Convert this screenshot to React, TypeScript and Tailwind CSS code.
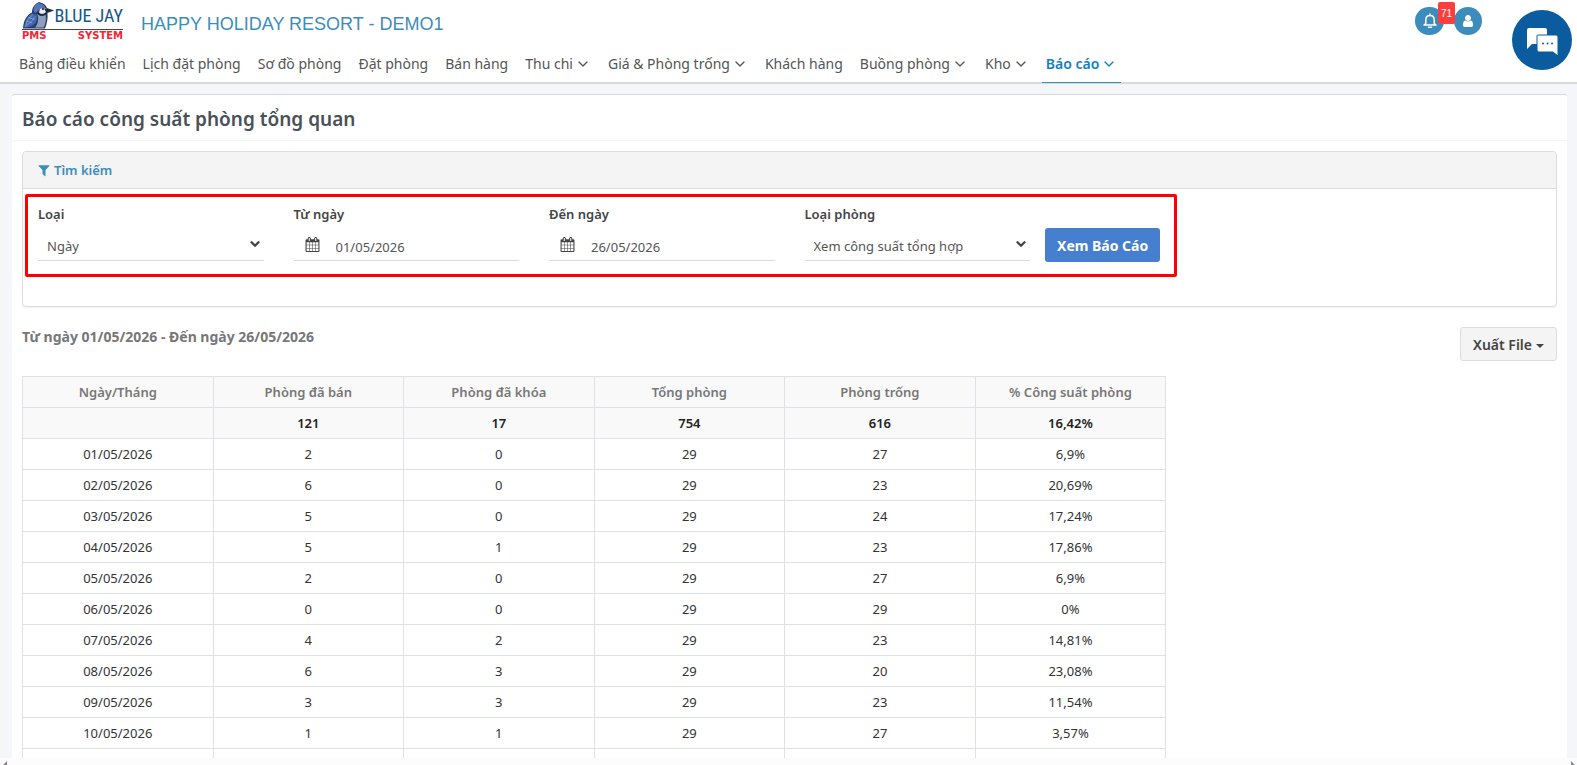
import { ReactNode } from 'react';
import { ChevronDown } from 'lucide-react';

const navItems = [
  { label: 'Bảng điều khiển' },
  { label: 'Lịch đặt phòng' },
  { label: 'Sơ đồ phòng' },
  { label: 'Đặt phòng' },
  { label: 'Bán hàng' },
  { label: 'Thu chi', dropdown: true },
  { label: 'Giá & Phòng trống', dropdown: true },
  { label: 'Khách hàng' },
  { label: 'Buồng phòng', dropdown: true },
  { label: 'Kho', dropdown: true },
  { label: 'Báo cáo', dropdown: true, active: true },
];

const columns = ['Ngày/Tháng', 'Phòng đã bán', 'Phòng đã khóa', 'Tổng phòng', 'Phòng trống', '% Công suất phòng'];

const totals = ['', '121', '17', '754', '616', '16,42%'];

const rows = [
  ['01/05/2026', '2', '0', '29', '27', '6,9%'],
  ['02/05/2026', '6', '0', '29', '23', '20,69%'],
  ['03/05/2026', '5', '0', '29', '24', '17,24%'],
  ['04/05/2026', '5', '1', '29', '23', '17,86%'],
  ['05/05/2026', '2', '0', '29', '27', '6,9%'],
  ['06/05/2026', '0', '0', '29', '29', '0%'],
  ['07/05/2026', '4', '2', '29', '23', '14,81%'],
  ['08/05/2026', '6', '3', '29', '20', '23,08%'],
  ['09/05/2026', '3', '3', '29', '23', '11,54%'],
  ['10/05/2026', '1', '1', '29', '27', '3,57%'],
  ['', '', '', '', '', ''],
];

function BirdIcon() {
  return (
    <svg viewBox="0 0 64 54" className="h-[27px] w-8" aria-hidden="true">
      <path d="M2 53 C3 36 10 26 20 21 C20 12 24 5 34 0 C43 2 48 6 50 12 L64 17 L51 22 C52 34 50 44 46 53 Z" fill="#2b3c69" />
      <path d="M23 17 C23 10 27 4 34 2 C41 4 45 7 47 11 L38 13 C34 15 31 20 26 22 Z" fill="#5577b8" />
      <path d="M36 14 C40 11 46 11 49 14 L48 20 C44 25 37 25 34 21 Z" fill="#e8ebf2" />
      <path d="M44 13 L64 17 L48 20 Z" fill="#20242e" />
      <circle cx="42" cy="14" r="2" fill="#10141f" />
      <path d="M30 22 C34 29 42 29 47 25 C49 36 47 44 43 51 L26 51 C33 43 34 33 30 22 Z" fill="#8f9ebd" />
      <path d="M20 23 C10 28 6 38 4 51 C20 51 33 43 30 26 Z" fill="#4266b0" />
      <path d="M21 26 C14 31 9 39 7 49 M26 29 C21 37 15 43 9 48 M13 31 L25 35 M9 38 L20 42" stroke="#93a9d6" strokeWidth="1.5" fill="none" />
      <path d="M31 21 C35 28 43 28 49 22" stroke="#1a2038" strokeWidth="2.5" fill="none" />
    </svg>
  );
}

function Logo() {
  return (
    <a href="#" className="flex w-[101px] flex-col pt-[2px]">
      <span className="flex h-[27px] items-center justify-between">
        <BirdIcon />
        <span className="whitespace-nowrap font-['Liberation_Sans_Narrow','Roboto_Condensed','Liberation_Sans',sans-serif] text-[18px] leading-7 text-[#10568c]">BLUE JAY</span>
      </span>
      <span className="flex justify-between border-t border-[#444] pt-px font-['DejaVu_Sans',sans-serif] text-[10px] leading-[9px] font-bold text-[#f32735]">
        <span>PMS</span>
        <span>SYSTEM</span>
      </span>
    </a>
  );
}

function CalendarIcon() {
  return (
    <svg viewBox="0 0 1792 1792" className="h-[15px] w-[15px] shrink-0" fill="#444" aria-hidden="true">
      <path d="M192 1664h288v-288h-288v288zm352 0h320v-288h-320v288zm-352-352h288v-320h-288v320zm352 0h320v-320h-320v320zm-352-384h288v-288h-288v288zm736 736h320v-288h-320v288zm-384-736h320v-288h-320v288zm768 736h288v-288h-288v288zm-384-352h320v-320h-320v320zm-352-864v-288q0-13-9.5-22.5t-22.5-9.5h-64q-13 0-22.5 9.5t-9.5 22.5v288q0 13 9.5 22.5t22.5 9.5h64q13 0 22.5-9.5t9.5-22.5zm736 864h288v-320h-288v320zm-384-384h320v-288h-320v288zm384 0h288v-288h-288v288zm32-480v-288q0-13-9.5-22.5t-22.5-9.5h-64q-13 0-22.5 9.5t-9.5 22.5v288q0 13 9.5 22.5t22.5 9.5h64q13 0 22.5-9.5t9.5-22.5zm384-64v1280q0 52-38 90t-90 38h-1408q-52 0-90-38t-38-90v-1280q0-52 38-90t90-38h128v-96q0-66 47-113t113-47h64q66 0 113 47t47 113v96h384v-96q0-66 47-113t113-47h64q66 0 113 47t47 113v96h128q52 0 90 38t38 90z" />
    </svg>
  );
}

function Field({ id, label, children }: { id: string, label: string, children: ReactNode }) {
  return (
    <div className="px-[15px]">
      <label htmlFor={id} className="block text-[13px] leading-5 font-semibold text-[#444]">{label}</label>
      <div className="mt-1 flex h-[33px] items-center border-b border-[#d9d9d9] text-[13px] text-[#555]">{children}</div>
    </div>
  );
}

function SelectField({ id, label, options }: { id: string, label: string, options: string[] }) {
  return (
    <Field id={id} label={label}>
      <select id={id} className="h-full w-full appearance-none bg-transparent pt-1.5 pl-[9px] outline-none">
        {options.map((o) => <option key={o}>{o}</option>)}
      </select>
      <ChevronDown className="pointer-events-none mr-px -ml-4 h-[14px] w-[14px] shrink-0 text-[#444]" strokeWidth={4} />
    </Field>
  );
}

function DateField({ id, label, value }: { id: string, label: string, value: string }) {
  return (
    <Field id={id} label={label}>
      <span className="pl-[11px]"><CalendarIcon /></span>
      <input id={id} type="text" defaultValue={value} className="h-full w-full min-w-0 bg-transparent pt-1.5 pl-4 outline-none" />
    </Field>
  );
}

function Header() {
  return (
    <header className="relative shrink-0 border-b-2 border-[#d9d9d9] bg-white">
      <div className="flex h-[45px] items-start justify-between pl-[22px]">
        <div className="flex">
          <Logo />
          <h1 className="ml-[18px] pt-[10px] font-['Liberation_Sans',sans-serif] text-[18px] leading-7 text-[#3c8dbc]">HAPPY HOLIDAY RESORT - DEMO1</h1>
        </div>
        <div className="flex gap-[10px] pt-[7px] pr-[95px]">
          <button aria-label="Thông báo" className="relative flex h-7 w-[29px] items-center justify-center rounded-full bg-[#3c8dbc]">
            <svg viewBox="0 0 16 16" className="h-4 w-4" fill="none" stroke="#fff" strokeWidth="1.5" strokeLinecap="round" strokeLinejoin="round">
              <path d="M8 1 V2.5 M3.8 10.5 V7 C3.8 4.2 5.6 2.6 8 2.6 S12.2 4.2 12.2 7 V10.5 L14 12 H2 Z M6.5 14.3 H9.5" />
            </svg>
            <span className="absolute -top-[5px] left-[23px] flex h-[22px] w-[17px] items-center justify-center rounded-xs bg-[#ff3d3d] font-['Liberation_Sans',sans-serif] text-[10px] text-white">71</span>
          </button>
          <button aria-label="Tài khoản" className="flex h-7 w-7 items-center justify-center rounded-full bg-[#3c8dbc]">
            <svg viewBox="0 0 1792 1792" className="h-[14px] w-[14px]" fill="#fff">
              <path d="M1536 1399q0 109-62.5 187t-150.5 78h-854q-88 0-150.5-78t-62.5-187q0-85 8.5-160.5t31.5-152 58.5-131 94-89 134.5-34.5q131 128 313 128t313-128q76 0 134.5 34.5t94 89 58.5 131 31.5 152 8.5 160.5zm-256-887q0 159-112.5 271.5t-271.5 112.5-271.5-112.5-112.5-271.5 112.5-271.5 271.5-112.5 271.5 112.5 112.5 271.5z" />
            </svg>
          </button>
        </div>
      </div>
      <nav className="flex gap-[9px] pb-px pl-[15px]">
        {navItems.map((item) => (
          <a
            key={item.label}
            href="#"
            className={`relative flex h-9 items-center gap-0.5 px-1 whitespace-nowrap text-[14px] ${item.active ? 'font-semibold text-[#0f80c1] after:absolute after:inset-x-0 after:-bottom-[2px] after:h-px after:bg-[#3c8dbc]' : 'text-[#555]'}`}
          >
            {item.label}
            {item.dropdown && <ChevronDown className="mt-0.5 h-4 w-4" strokeWidth={2} />}
          </a>
        ))}
      </nav>
      <button aria-label="Chat" className="absolute top-[10px] right-[5px] flex h-[60px] w-[60px] items-center justify-center rounded-full bg-[#0a5c9e]">
        <svg viewBox="0 0 60 60" className="h-[60px] w-[60px]">
          <path d="M17 18 H33 Q35 18 35 20 V34 H20 L15 39 V20 Q15 18 17 18 Z" fill="#fff" />
          <path d="M26 25 H44 Q46 25 46 27 V46 L41 42 H27 Q25 42 25 40 V26 Q25 25 26 25 Z" fill="#fff" stroke="#0a5c9e" />
          <circle cx="31" cy="33.5" r="1" fill="#0a5c9e" />
          <circle cx="35.5" cy="33.5" r="1" fill="#0a5c9e" />
          <circle cx="40" cy="33.5" r="1" fill="#0a5c9e" />
        </svg>
      </button>
    </header>
  );
}

function SearchPanel() {
  return (
    <section className="relative rounded border border-[#dcdcdc] bg-white shadow-[0_1px_1px_rgba(0,0,0,0.05)]">
      <h3 className="flex h-[37px] items-center gap-1 rounded-t border-b border-[#dcdcdc] bg-[#f4f4f4] pt-px pl-[15px] text-[13px] font-semibold text-[#3c8dbc]">
        <svg viewBox="128 128 1536 1600" className="h-[13px] w-3" fill="currentColor" aria-hidden="true">
          <path d="M1595 295q17 41-14 70l-493 493v742q0 42-39 59-13 5-25 5-27 0-45-19l-256-256q-19-19-19-45v-486l-493-493q-31-29-14-70 17-39 59-39h1280q42 0 59 39z" />
        </svg>
        Tìm kiếm
      </h3>
      <form className="grid grid-cols-6 pt-[15px] pb-11">
        <SelectField id="type" label="Loại" options={['Ngày', 'Tháng']} />
        <DateField id="from" label="Từ ngày" value="01/05/2026" />
        <DateField id="to" label="Đến ngày" value="26/05/2026" />
        <SelectField id="room" label="Loại phòng" options={['Xem công suất tổng hợp']} />
        <div className="pt-6">
          <button type="button" className="h-[34px] rounded-[3px] bg-[#467fd0] px-3 text-[14px] font-bold whitespace-nowrap text-white">Xem Báo Cáo</button>
        </div>
      </form>
      <div className="pointer-events-none absolute top-[42px] left-[2px] h-[83px] w-[calc(75%+2px)] rounded-xs border-3 border-[#ff0000]" />
    </section>
  );
}

function ReportTable() {
  return (
    <table className="w-[calc(75%-7px)] table-fixed border-collapse text-center text-[13px] leading-5 text-[#333]">
      <thead className="bg-[#f9f9f9]">
        <tr>
          {columns.map((c) => <th key={c} className="h-[31px] border border-[#dee2e6] font-semibold text-[#777]">{c}</th>)}
        </tr>
        <tr>
          {totals.map((t, i) => <td key={i} className="h-[31px] border border-[#dee2e6] font-semibold text-[#222]">{t}</td>)}
        </tr>
      </thead>
      <tbody>
        {rows.map((row, i) => (
          <tr key={i}>
            {row.map((cell, j) => <td key={j} className="h-[31px] border border-[#dee2e6]">{cell}</td>)}
          </tr>
        ))}
      </tbody>
    </table>
  );
}

export default function App() {
  return (
    <div className="flex h-screen flex-col bg-[#f5f6fa] font-['Noto_Sans','Open_Sans',sans-serif]">
      <Header />
      <main className="min-h-0 flex-1 overflow-y-auto pt-[10px] pr-[10px] pl-3 [scrollbar-width:none]">
        <div className="rounded-t-[3px] border-t border-[#d2d6de] bg-white">
          <h2 className="flex h-[46px] items-center border-b border-[#f4f4f4] px-[10px] pt-1 text-[19px] font-semibold text-[#495057]">Báo cáo công suất phòng tổng quan</h2>
          <div className="p-[10px]">
            <SearchPanel />
            <div className="flex items-start justify-between pt-5">
              <p className="text-[14px] leading-5 font-bold text-[#777]">Từ ngày 01/05/2026 - Đến ngày 26/05/2026</p>
              <button className="flex h-[34px] items-center gap-1 rounded-[3px] border border-[#ddd] bg-[#f4f4f4] px-3 text-[14px] font-semibold text-[#444]">
                Xuất File
                <span className="mt-1 border-x-4 border-t-4 border-x-transparent border-t-[#444]" />
              </button>
            </div>
            <div className="pt-[15px]">
              <ReportTable />
            </div>
          </div>
        </div>
      </main>
      <div className="flex h-[7px] shrink-0 items-end justify-between bg-[#fcfcfc] pr-0.5 pl-[3px]">
        <span className="border-b-4 border-l-4 border-b-[#888] border-l-transparent" />
        <span className="border-r-4 border-b-4 border-r-transparent border-b-[#888]" />
      </div>
    </div>
  );
}
